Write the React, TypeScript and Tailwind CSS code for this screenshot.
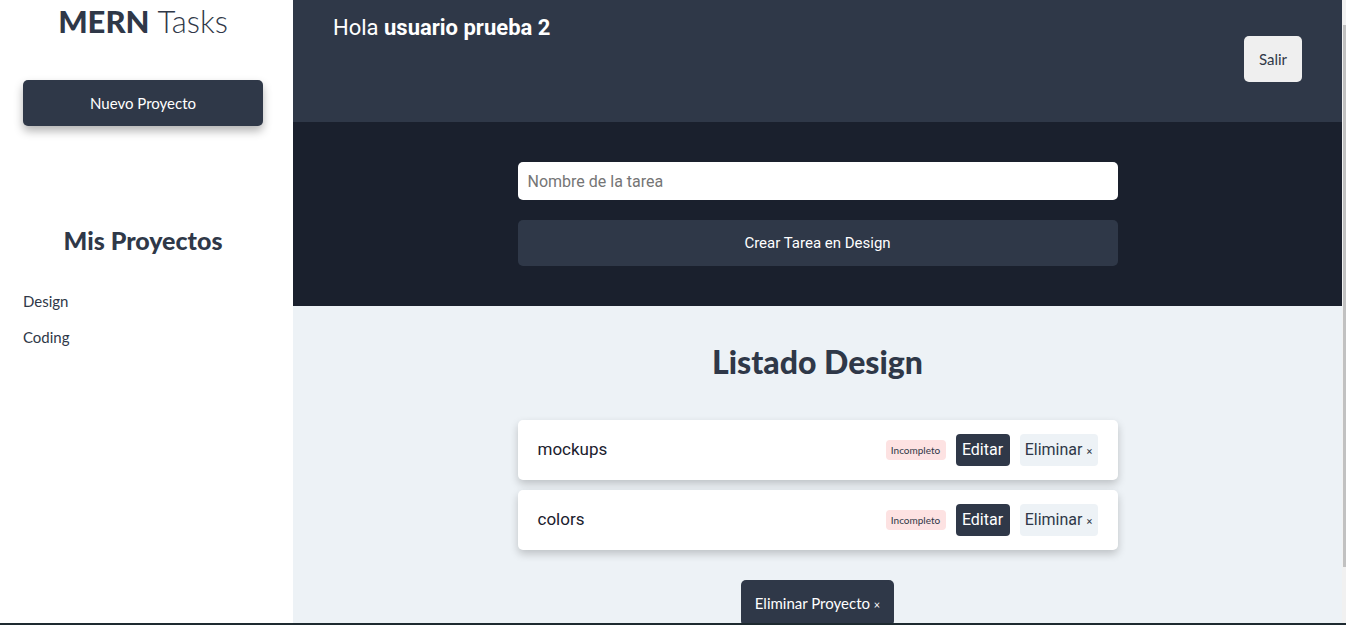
const tasks = [
  { name: "mockups", done: false },
  { name: "colors", done: false },
];

const raleway = "font-['Lato','Noto_Sans',sans-serif]";
const roboto = "font-['Roboto','Liberation_Sans',sans-serif]";

const Sidebar = () => (
  <aside className={`w-[293px] shrink-0 bg-white pl-[23px] pr-[30px] ${raleway}`}>
    <h1 className="pt-[2px] text-center text-[31px] leading-[38px] text-[#2f3848]">
      <span className="font-black">MERN</span> <span className="font-light">Tasks</span>
    </h1>
    <button className="mt-10 h-[46px] w-[240px] rounded-[5px] bg-[#2f3848] text-[15px] text-white shadow-[0_5px_10px_rgba(0,0,0,0.3)]">
      Nuevo Proyecto
    </button>
    <h2 className="mt-[99px] text-center text-[25px] font-black leading-[30px] text-[#2f3848]">
      Mis Proyectos
    </h2>
    <ul className="mt-[36px] flex flex-col gap-[16px] text-[15px] leading-[20px] text-[#2f3848]">
      <li>Design</li>
      <li>Coding</li>
    </ul>
  </aside>
);

const Task = ({ name }: { name: string }) => (
  <li className="flex h-[60px] items-center justify-between rounded-[5px] bg-white px-5 shadow-[0_4px_8px_rgba(0,0,0,0.2)]">
    <p className={`${roboto} text-[17px] text-[#1a202d]`}>{name}</p>
    <div className="flex items-center gap-[10px]">
      <span className={`${raleway} flex h-[20px] w-[60px] items-center justify-center rounded-[4px] bg-[#fde2e2] text-[10px] text-[#2f3848]`}>
        Incompleto
      </span>
      <button className={`${roboto} h-[32px] w-[54px] rounded-[4px] bg-[#2f3848] text-[16px] text-white`}>
        Editar
      </button>
      <button className={`${roboto} h-[32px] w-[78px] rounded-[4px] bg-[#edf2f6] text-[16px] text-[#2f3848]`}>
        Eliminar <span className="text-[11px]">×</span>
      </button>
    </div>
  </li>
);

export default function App() {
  return (
    <div className="flex h-[625px] w-[1346px] flex-col overflow-hidden">
      <div className="flex h-[623px] overflow-hidden">
        <Sidebar />
        <main className="flex flex-1 flex-col bg-[#edf2f6]">
          <header className="flex h-[122px] shrink-0 items-start justify-between bg-[#2f3848] px-10">
            <p className={`${roboto} pt-[14px] text-[22px] leading-[28px] text-white`}>
              Hola <span className="font-bold">usuario prueba 2</span>
            </p>
            <button className={`${raleway} mt-9 h-[46px] w-[58px] rounded-[5px] bg-[#efefef] text-[15px] text-[#2f3848]`}>
              Salir
            </button>
          </header>
          <section className="flex shrink-0 flex-col items-center gap-5 bg-[#1a202d] py-10">
            <input
              className={`${roboto} h-[38px] w-[600px] rounded-[5px] bg-white px-[10px] text-[16px] outline-none placeholder:text-[#757575]`}
              placeholder="Nombre de la tarea"
            />
            <button className={`${roboto} h-[46px] w-[600px] rounded-[5px] bg-[#2f3848] text-[15px] text-white`}>
              Crear Tarea en Design
            </button>
          </section>
          <section className="flex flex-col items-center">
            <h2 className={`${raleway} mt-[37px] text-[32px] font-black leading-[38px] text-[#2f3848]`}>
              Listado Design
            </h2>
            <ul className="mt-[39px] flex w-[600px] flex-col gap-[10px]">
              {tasks.map((t) => (
                <Task key={t.name} name={t.name} />
              ))}
            </ul>
            <button className={`${raleway} mt-[30px] h-[46px] w-[153px] rounded-[5px] bg-[#2f3848] text-[15px] text-white`}>
              Eliminar Proyecto <span className="text-[11px]">×</span>
            </button>
          </section>
        </main>
        <div className="w-[4px] shrink-0 bg-[#f1f1f1] pl-[1px] pt-[25px]">
          <div className="h-[542px] bg-[#c1c1c1]" />
        </div>
      </div>
      <div className="h-[2px] bg-[#1e2a30]" />
    </div>
  );
}
